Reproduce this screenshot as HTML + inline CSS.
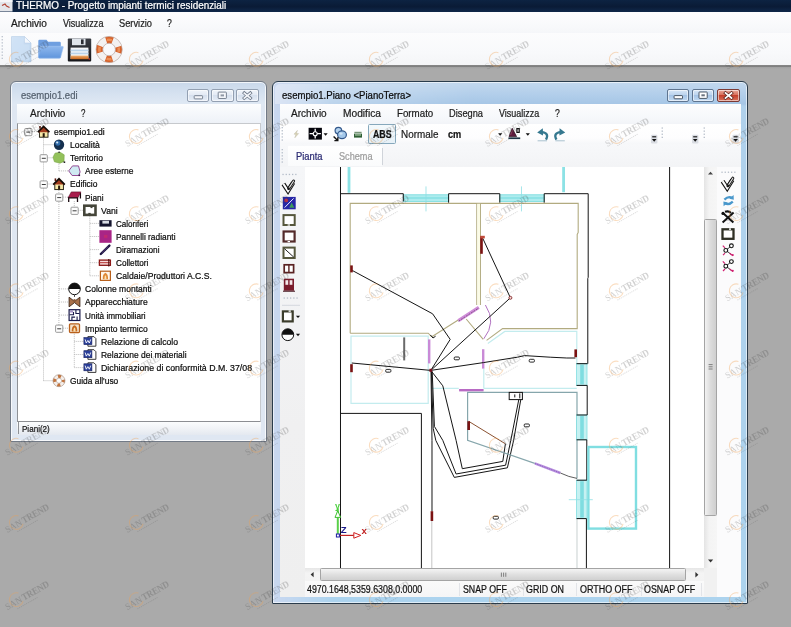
<!DOCTYPE html>
<html lang="it">
<head>
<meta charset="utf-8">
<title>THERMO - Progetto impianti termici residenziali</title>
<style>
*{box-sizing:border-box;margin:0;padding:0}
html,body{width:791px;height:627px;overflow:hidden;background:#aaaaaa}
body{position:relative;font-family:"Liberation Sans",sans-serif;}
.t{position:absolute;white-space:nowrap;line-height:1;transform-origin:0 50%;-webkit-text-stroke:0.22px currentColor;}
#root{position:absolute;left:0;top:0;width:791px;height:627px;overflow:hidden;will-change:transform;}
.a{position:absolute;overflow:visible}
</style>
</head>
<body>
<div id="root"><div style="position:absolute;left:0px;top:0px;width:791px;height:12.4px;background:linear-gradient(#0d2342,#0a1b36 55%,#10284a);"></div>
<svg class="a" style="left:0;top:0" width="13" height="12" viewBox="0 0 13 12"><rect x="0" y="0" width="12.5" height="11.5" fill="#e4e6ea"/><path d="M2 5.5 L5 4 L6.5 6 L9.5 7.5" stroke="#b04030" stroke-width="1.2" fill="none"/><rect x="0" y="0" width="12.5" height="2" fill="#f6f6f8"/></svg>
<span class="t" style="left:16.30px;top:0.65px;font-size:10.2px;color:#fff;transform:scaleX(0.9721);">THERMO - Progetto impianti termici residenziali</span>
<div style="position:absolute;left:0px;top:12.4px;width:791px;height:20.6px;background:linear-gradient(#fdfdfe,#f8f9fb 70%,#f5f6f9);"></div>
<span class="t" style="left:11.00px;top:18.60px;font-size:10.3px;color:#1c1c1c;transform:scaleX(0.9827);">Archivio</span>
<span class="t" style="left:62.60px;top:18.60px;font-size:10.3px;color:#1c1c1c;transform:scaleX(0.8747);">Visualizza</span>
<span class="t" style="left:118.70px;top:18.60px;font-size:10.3px;color:#1c1c1c;transform:scaleX(0.9008);">Servizio</span>
<span class="t" style="left:167.20px;top:18.60px;font-size:10.3px;color:#1c1c1c;transform:scaleX(0.8379);">?</span>
<div style="position:absolute;left:0px;top:33px;width:791px;height:32.6px;background:linear-gradient(#fcfcfd,#f8f9fb 60%,#f4f5f7);"></div>
<div style="position:absolute;left:0px;top:65.4px;width:791px;height:3.2px;background:linear-gradient(#8a8a8a,#7c7c7c 35%,#a2a2a2 60%,#aaaaaa);"></div>
<svg class="a" style="left:0;top:0" width="6" height="66" viewBox="0 0 6 66"><rect x="1.6" y="36.0" width="1.3" height="1.3" fill="#b9c0cc"/><rect x="1.6" y="39.1" width="1.3" height="1.3" fill="#b9c0cc"/><rect x="1.6" y="42.2" width="1.3" height="1.3" fill="#b9c0cc"/><rect x="1.6" y="45.3" width="1.3" height="1.3" fill="#b9c0cc"/><rect x="1.6" y="48.4" width="1.3" height="1.3" fill="#b9c0cc"/><rect x="1.6" y="51.5" width="1.3" height="1.3" fill="#b9c0cc"/><rect x="1.6" y="54.6" width="1.3" height="1.3" fill="#b9c0cc"/><rect x="1.6" y="57.7" width="1.3" height="1.3" fill="#b9c0cc"/></svg>
<svg class="a" style="left:8px;top:33.8px" width="120" height="32" viewBox="8 33 120 32">
<defs>
<linearGradient id="gdoc" x1="0" y1="0" x2="1" y2="1"><stop offset="0" stop-color="#d6e6f7"/><stop offset="1" stop-color="#b9d3ee"/></linearGradient>
<linearGradient id="gfol" x1="0" y1="0" x2="0" y2="1"><stop offset="0" stop-color="#8fb8ee"/><stop offset="1" stop-color="#5f95dc"/></linearGradient>
<linearGradient id="gfl" x1="0" y1="0" x2="0" y2="1"><stop offset="0" stop-color="#3a3d44"/><stop offset="1" stop-color="#17181c"/></linearGradient>
<linearGradient id="gor" x1="0" y1="0" x2="0" y2="1"><stop offset="0" stop-color="#f0b070"/><stop offset="1" stop-color="#c8661c"/></linearGradient>
<radialGradient id="gbu" cx="0.5" cy="0.4" r="0.6"><stop offset="0" stop-color="#f08a4a"/><stop offset="1" stop-color="#c4501a"/></radialGradient>
</defs>
<!-- new doc -->
<path d="M11.5 35.6 H24.5 L31 42 V60.8 H11.5 Z" fill="url(#gdoc)" stroke="#b4cbe4" stroke-width="0.6"/>
<path d="M24.5 35.6 V42 H31 Z" fill="#f4f8fd" stroke="#b4cbe4" stroke-width="0.5"/>
<path d="M13 37 H23.5 V43.5 H29.5 V59.5 H13 Z" fill="#cfe1f5" opacity="0.7"/>
<!-- folder -->
<path d="M38.3 40 q0 -1.2 1.2 -1.2 h7 l1.6 2 h11.5 q1.2 0 1.2 1.2 v14 q0 1.2 -1.2 1.2 h-20 q-1.3 0 -1.3 -1.2 z" fill="#6f9fe0"/>
<path d="M40.3 45.3 h22 q1.3 0 1 1.2 l-2.6 9.7 q-0.3 1 -1.5 1 h-19.6 q-1.3 0 -1.3 -1.2 z" fill="url(#gfol)" stroke="#a8c8f2" stroke-width="0.5"/>
<!-- floppy -->
<path d="M67.8 38.6 q0 -1 1 -1 h21.4 q1 0 1 1 v20.8 q0 1 -1 1 h-21.4 q-1 0 -1 -1 z" fill="url(#gfl)"/>
<rect x="72" y="37.6" width="13.5" height="6.6" fill="#dfe4ea"/>
<rect x="81" y="38.4" width="2.6" height="4.8" fill="#2a2c32"/>
<rect x="70.6" y="46.6" width="17.8" height="11.4" fill="#f4f6f8"/>
<rect x="70.6" y="48.6" width="17.8" height="1.7" fill="#b9d3ea"/>
<rect x="70.6" y="51.6" width="17.8" height="1.7" fill="#b9d3ea"/>
<rect x="70.6" y="54.6" width="17.8" height="3.6" fill="url(#gor)"/>
<rect x="88.6" y="57.2" width="1.3" height="1.6" fill="#b03020"/>
<!-- lifebuoy -->
<circle cx="109.1" cy="48.5" r="9.7" fill="none" stroke="#f3f1f0" stroke-width="6.8"/>
<circle cx="109.1" cy="48.5" r="9.7" fill="none" stroke="#d8622a" stroke-width="6.8" stroke-dasharray="6.6 8.64" stroke-dashoffset="3.3"/>
<circle cx="109.1" cy="48.5" r="9.7" fill="none" stroke="#f09a60" stroke-width="2.6" stroke-dasharray="5 10.24" stroke-dashoffset="2.5" opacity="0.8"/>
<circle cx="109.1" cy="48.5" r="13.1" fill="none" stroke="#b9a8a0" stroke-width="0.7"/>
<circle cx="109.1" cy="48.5" r="6.3" fill="none" stroke="#b9a8a0" stroke-width="0.7"/>
</svg>
<div style="position:absolute;left:9.9px;top:80.6px;width:257.6px;height:361.20000000000005px;border:1px solid #727a86;border-radius:6px 6px 1px 1px;background:linear-gradient(#c9d8ea,#d6e2f0 12px,#e0e9f4 23px,#dfe7f2 24px,#dfe7f2);box-shadow:inset 0 0 0 1px rgba(255,255,255,.75)"></div>
<span class="t" style="left:20.90px;top:90.55px;font-size:10.4px;color:#54606e;transform:scaleX(0.9149);">esempio1.edi</span>
<div style="position:absolute;left:186.8px;top:89px;width:22.4px;height:13px;border:1px solid #93a0b2;border-radius:2px;background:linear-gradient(#f0f4fa,#e3eaf4 45%,#d6e0ee 50%,#e6edf6);box-shadow:inset 0 0 0 1px rgba(255,255,255,.55)"></div><svg class="a" style="left:186.8px;top:89px" width="22.4" height="13" viewBox="186.8 89 22.4 13"><rect x="194.0" y="95.7" width="8.4" height="3.2" rx="0.6" fill="#f4f6fa" stroke="#6d7888" stroke-width="0.9"/></svg>
<div style="position:absolute;left:211.3px;top:89px;width:22.4px;height:13px;border:1px solid #93a0b2;border-radius:2px;background:linear-gradient(#f0f4fa,#e3eaf4 45%,#d6e0ee 50%,#e6edf6);box-shadow:inset 0 0 0 1px rgba(255,255,255,.55)"></div><svg class="a" style="left:211.3px;top:89px" width="22.4" height="13" viewBox="211.3 89 22.4 13"><rect x="218.5" y="92.1" width="8.2" height="6.4" rx="0.6" fill="#f4f6fa" stroke="#6d7888" stroke-width="0.9"/><rect x="220.9" y="94.4" width="3.4" height="2" fill="#6d7888" opacity="0.75"/></svg>
<div style="position:absolute;left:236px;top:89px;width:22.6px;height:13px;border:1px solid #93a0b2;border-radius:2px;background:linear-gradient(#f0f4fa,#e3eaf4 45%,#d6e0ee 50%,#e6edf6);box-shadow:inset 0 0 0 1px rgba(255,255,255,.55)"></div><svg class="a" style="left:236px;top:89px" width="22.6" height="13" viewBox="236 89 22.6 13"><path d="M244.3 93.1 L250.3 98.1 M250.3 93.1 L244.3 98.1" stroke="#6d7888" stroke-width="3.2" stroke-linecap="square"/><path d="M244.3 93.1 L250.3 98.1 M250.3 93.1 L244.3 98.1" stroke="#f4f6fa" stroke-width="1.7" stroke-linecap="square"/></svg>
<div style="position:absolute;left:16.6px;top:104px;width:244.4px;height:19.5px;background:linear-gradient(#fcfdfe,#f3f6fa 60%,#edf1f7);"></div>
<span class="t" style="left:29.70px;top:108.60px;font-size:10.3px;color:#1c1c1c;transform:scaleX(0.9663);">Archivio</span>
<span class="t" style="left:81.40px;top:108.60px;font-size:10.3px;color:#1c1c1c;transform:scaleX(0.7681);">?</span>
<div style="position:absolute;left:17.2px;top:123.4px;width:243.8px;height:299.2px;background:#fff;border:1px solid #c6c9cd;border-left:1.5px solid #8e9196;border-bottom:2.2px solid #8c8e92;"></div>
<div style="position:absolute;left:16.6px;top:422px;width:244.4px;height:13px;background:linear-gradient(#fbfcfd,#eef1f5 60%,#e4e9f0);"></div>
<div style="position:absolute;left:17.6px;top:422.4px;width:1.2px;height:11.6px;background:#8e9196;"></div>
<span class="t" style="left:21.60px;top:423.90px;font-size:9.7px;color:#111;transform:scaleX(0.8317);">Piani(2)</span>
<svg class="a" style="left:18px;top:124px" width="242" height="297" viewBox="18 124 242 297"><path d="M43.5 135.6 V380.7" stroke="#b4b4b4" stroke-width="0.9" stroke-dasharray="1 1"/><path d="M58.9 188.0 V328.2" stroke="#b4b4b4" stroke-width="0.9" stroke-dasharray="1 1"/><path d="M58.9 161.8 V170.9" stroke="#b4b4b4" stroke-width="0.9" stroke-dasharray="1 1"/><path d="M74.3 201.1 V210.3" stroke="#b4b4b4" stroke-width="0.9" stroke-dasharray="1 1"/><path d="M89.8 214.3 V275.8" stroke="#b4b4b4" stroke-width="0.9" stroke-dasharray="1 1"/><path d="M74.3 332.2 V367.6" stroke="#b4b4b4" stroke-width="0.9" stroke-dasharray="1 1"/><path d="M28.0 131.6 H37.6" stroke="#b4b4b4" stroke-width="0.9" stroke-dasharray="1 1"/><path d="M43.5 144.7 H53.0" stroke="#b4b4b4" stroke-width="0.9" stroke-dasharray="1 1"/><path d="M43.5 157.8 H53.0" stroke="#b4b4b4" stroke-width="0.9" stroke-dasharray="1 1"/><path d="M58.9 170.9 H68.5" stroke="#b4b4b4" stroke-width="0.9" stroke-dasharray="1 1"/><path d="M43.5 184.0 H53.0" stroke="#b4b4b4" stroke-width="0.9" stroke-dasharray="1 1"/><path d="M58.9 197.1 H68.5" stroke="#b4b4b4" stroke-width="0.9" stroke-dasharray="1 1"/><path d="M74.3 210.3 H83.9" stroke="#b4b4b4" stroke-width="0.9" stroke-dasharray="1 1"/><path d="M89.8 223.4 H99.4" stroke="#b4b4b4" stroke-width="0.9" stroke-dasharray="1 1"/><path d="M89.8 236.5 H99.4" stroke="#b4b4b4" stroke-width="0.9" stroke-dasharray="1 1"/><path d="M89.8 249.6 H99.4" stroke="#b4b4b4" stroke-width="0.9" stroke-dasharray="1 1"/><path d="M89.8 262.7 H99.4" stroke="#b4b4b4" stroke-width="0.9" stroke-dasharray="1 1"/><path d="M89.8 275.8 H99.4" stroke="#b4b4b4" stroke-width="0.9" stroke-dasharray="1 1"/><path d="M58.9 288.9 H68.5" stroke="#b4b4b4" stroke-width="0.9" stroke-dasharray="1 1"/><path d="M58.9 302.0 H68.5" stroke="#b4b4b4" stroke-width="0.9" stroke-dasharray="1 1"/><path d="M58.9 315.1 H68.5" stroke="#b4b4b4" stroke-width="0.9" stroke-dasharray="1 1"/><path d="M58.9 328.2 H68.5" stroke="#b4b4b4" stroke-width="0.9" stroke-dasharray="1 1"/><path d="M74.3 341.4 H83.9" stroke="#b4b4b4" stroke-width="0.9" stroke-dasharray="1 1"/><path d="M74.3 354.5 H83.9" stroke="#b4b4b4" stroke-width="0.9" stroke-dasharray="1 1"/><path d="M74.3 367.6 H83.9" stroke="#b4b4b4" stroke-width="0.9" stroke-dasharray="1 1"/><path d="M43.5 380.7 H53.0" stroke="#b4b4b4" stroke-width="0.9" stroke-dasharray="1 1"/><rect x="24.7" y="128.5" width="7.2" height="7.2" rx="0.8" fill="#fdfdfd" stroke="#8e8e8e" stroke-width="0.9"/><path d="M26.3 132.1 H30.3" stroke="#3a3a3a" stroke-width="1"/><rect x="39.4" y="131.0" width="8.6" height="6.2" fill="#f6e9a8" stroke="#1a1408" stroke-width="0.9"/><path d="M37.800000000000004 132.2 L43.6 126.39999999999999 L49.4 132.2" fill="#a03a1c" stroke="#140c06" stroke-width="1.7" stroke-linejoin="miter"/><rect x="42.7" y="133.2" width="2" height="3.8" fill="#2a1a0a"/><rect x="39.2" y="126.0" width="1.6" height="2.6" fill="#5a1a10"/><circle cx="59.0" cy="144.7" r="5.2" fill="#15304f"/><circle cx="57.8" cy="143.1" r="2.6" fill="#2f6aa8"/><circle cx="57.2" cy="142.5" r="1.1" fill="#cfe2f4"/><rect x="40.1" y="154.7" width="7.2" height="7.2" rx="0.8" fill="#fdfdfd" stroke="#8e8e8e" stroke-width="0.9"/><path d="M41.8 158.3 H45.8" stroke="#3a3a3a" stroke-width="1"/><path d="M55.0 153.20000000000002 L60.0 152.20000000000002 L64.2 154.8 L64.0 161.4 L60.0 163.20000000000002 L54.4 161.8 L53.0 157.20000000000002 Z" fill="#93c15a" stroke="#7aa548" stroke-width="0.6"/><rect x="63.6" y="161.4" width="1.6" height="1.6" fill="#222"/><rect x="58.4" y="151.60000000000002" width="1.4" height="1.4" fill="#333"/><path d="M72.5 165.9 L78.5 165.9 L80.1 171.9 L78.9 175.5 L72.1 175.5 L68.7 170.9 Z" fill="#cfeaf2" stroke="#8a3a8a" stroke-width="0.9"/><rect x="78.5" y="174.5" width="1.6" height="1.6" fill="#3a1a4a"/><rect x="40.1" y="180.9" width="7.2" height="7.2" rx="0.8" fill="#fdfdfd" stroke="#8e8e8e" stroke-width="0.9"/><path d="M41.8 184.5 H45.8" stroke="#3a3a3a" stroke-width="1"/><rect x="54.8" y="183.4" width="8.6" height="6.2" fill="#f6e9a8" stroke="#1a1408" stroke-width="0.9"/><path d="M53.2 184.6 L59.0 178.8 L64.8 184.6" fill="#a03a1c" stroke="#140c06" stroke-width="1.7" stroke-linejoin="miter"/><rect x="58.1" y="185.6" width="2" height="3.8" fill="#2a1a0a"/><rect x="54.6" y="178.4" width="1.6" height="2.6" fill="#5a1a10"/><rect x="55.6" y="194.0" width="7.2" height="7.2" rx="0.8" fill="#fdfdfd" stroke="#8e8e8e" stroke-width="0.9"/><path d="M57.2 197.6 H61.2" stroke="#3a3a3a" stroke-width="1"/><path d="M68.7 201.9 V197.29999999999998 M77.5 201.9 V197.29999999999998 M80.4 198.5 V192.7" stroke="#1a0a10" stroke-width="1.3" fill="none"/><path d="M71.3 191.9 H80.9 L77.9 197.7 H68.1 Z" fill="#a81c4c" stroke="#5a0a24" stroke-width="0.6"/><path d="M68.1 197.9 H77.9" stroke="#1a0a10" stroke-width="1.1"/><rect x="71.0" y="207.2" width="7.2" height="7.2" rx="0.8" fill="#fdfdfd" stroke="#8e8e8e" stroke-width="0.9"/><path d="M72.6 210.8 H76.6" stroke="#3a3a3a" stroke-width="1"/><rect x="84.30000000000001" y="205.70000000000002" width="11.2" height="9.2" fill="#fff" stroke="#45463a" stroke-width="2.6"/><rect x="90.5" y="206.9" width="2" height="1.2" fill="#45463a"/><rect x="88.30000000000001" y="212.9" width="2.4" height="1.2" fill="#45463a"/><rect x="99.4" y="220.20000000000002" width="12.2" height="6.4" fill="#15152e"/><rect x="102.4" y="220.8" width="6.6" height="2.8" fill="#d8dce4"/><rect x="99.4" y="230.2" width="12.2" height="12.6" fill="#a92586"/><rect x="104.0" y="234.9" width="3.4" height="3" fill="#c02a70"/><path d="M100.80000000000001 254.0 L109.4 245.6" stroke="#1c1440" stroke-width="2.4" stroke-linecap="round"/><path d="M101.80000000000001 252.79999999999998 L108.4 246.4" stroke="#6a4a90" stroke-width="0.7"/><rect x="99.4" y="260.09999999999997" width="11" height="5.2" fill="#f6dada" stroke="#8a1616" stroke-width="1.3"/><path d="M99.4 262.7 H110.4" stroke="#b43030" stroke-width="1"/><path d="M108.80000000000001 258.9 V266.5" stroke="#4a0a0a" stroke-width="1.1"/><rect x="100.4" y="271.2" width="10" height="9.2" fill="#fff6ea" stroke="#b8601c" stroke-width="1.2"/><path d="M102.80000000000001 279.2 Q102.4 274.2 105.4 272.8 Q108.4 274.2 108.0 279.2 Z" fill="#e08a38"/><path d="M104.4 279.2 Q104.4 275.8 105.4 275.2 Q106.4 275.8 106.4 279.2 Z" fill="#fbe2b0"/><circle cx="74.5" cy="288.9" r="5.8" fill="#fff" stroke="#111" stroke-width="1"/><path d="M68.7 288.9 A5.8 5.8 0 0 1 80.3 288.9 Z" fill="#111"/><path d="M74.5 294.7 V296.9" stroke="#444" stroke-width="1"/><path d="M69.1 297.2 L74.5 301.4 L79.9 297.2 V306.8 L74.5 302.6 L69.1 306.8 Z" fill="#a8704a" stroke="#3a2416" stroke-width="0.9"/><circle cx="74.5" cy="300.6" r="1.5" fill="#8a5a3a"/><rect x="69.1" y="309.70000000000005" width="10.8" height="10.8" fill="#fff" stroke="#1a1a4a" stroke-width="1.2"/><path d="M69.5 314.70000000000005 H73.5 V312.1 M75.9 310.1 V313.5 H79.5 M71.9 320.1 V317.1 H75.1 M77.1 320.1 V316.5" stroke="#1a1a4a" stroke-width="1.1" fill="none"/><rect x="70.1" y="310.5" width="3" height="2" fill="#6a4aa0" opacity="0.6"/><rect x="55.6" y="325.1" width="7.2" height="7.2" rx="0.8" fill="#fdfdfd" stroke="#8e8e8e" stroke-width="0.9"/><path d="M57.2 328.8 H61.2" stroke="#3a3a3a" stroke-width="1"/><rect x="69.5" y="323.8" width="10" height="8.8" rx="1" fill="#f3e2cc" stroke="#b8601c" stroke-width="1.3"/><path d="M71.7 331.59999999999997 Q71.5 326.2 74.5 325.2 Q77.5 326.2 77.3 331.59999999999997 Z" fill="#c66a20"/><path d="M73.4 331.59999999999997 Q73.4 327.8 74.5 327.4 Q75.6 327.8 75.6 331.59999999999997 Z" fill="#fbe2b0"/><path d="M87.9 336.59999999999997 H93.9 L95.9 338.59999999999997 V346.2 H87.9 Z" fill="#fff" stroke="#222" stroke-width="0.9"/><rect x="83.9" y="337.59999999999997" width="8" height="7" fill="#2a3f9a" stroke="#151f5a" stroke-width="0.6"/><path d="M85.10000000000001 339.4 L86.30000000000001 343.0 L87.9 340.4 L89.30000000000001 343.0 L90.7 339.4" stroke="#fff" stroke-width="0.9" fill="none"/><path d="M87.9 349.7 H93.9 L95.9 351.7 V359.3 H87.9 Z" fill="#fff" stroke="#222" stroke-width="0.9"/><rect x="83.9" y="350.7" width="8" height="7" fill="#2a3f9a" stroke="#151f5a" stroke-width="0.6"/><path d="M85.10000000000001 352.5 L86.30000000000001 356.1 L87.9 353.5 L89.30000000000001 356.1 L90.7 352.5" stroke="#fff" stroke-width="0.9" fill="none"/><path d="M87.9 362.8 H93.9 L95.9 364.8 V372.40000000000003 H87.9 Z" fill="#fff" stroke="#222" stroke-width="0.9"/><rect x="83.9" y="363.8" width="8" height="7" fill="#2a3f9a" stroke="#151f5a" stroke-width="0.6"/><path d="M85.10000000000001 365.6 L86.30000000000001 369.20000000000005 L87.9 366.6 L89.30000000000001 369.20000000000005 L90.7 365.6" stroke="#fff" stroke-width="0.9" fill="none"/><circle cx="59.0" cy="380.7" r="4.3" fill="none" stroke="#f4eeea" stroke-width="3.2"/><circle cx="59.0" cy="380.7" r="4.3" fill="none" stroke="#c4743c" stroke-width="3.2" stroke-dasharray="3 3.75" stroke-dashoffset="1.5"/><circle cx="59.0" cy="380.7" r="6" fill="none" stroke="#a08878" stroke-width="0.6"/><circle cx="59.0" cy="380.7" r="2.6" fill="none" stroke="#a08878" stroke-width="0.5"/></svg>
<span class="t" style="left:54.00px;top:126.90px;font-size:9.7px;color:#0a0a0a;transform:scaleX(0.8804);">esempio1.edi</span>
<span class="t" style="left:69.60px;top:139.90px;font-size:9.7px;color:#0a0a0a;transform:scaleX(0.8943);">Località</span>
<span class="t" style="left:69.60px;top:152.90px;font-size:9.7px;color:#0a0a0a;transform:scaleX(0.8746);">Territorio</span>
<span class="t" style="left:85.20px;top:165.90px;font-size:9.7px;color:#0a0a0a;transform:scaleX(0.8750);">Aree esterne</span>
<span class="t" style="left:69.60px;top:178.90px;font-size:9.7px;color:#0a0a0a;transform:scaleX(0.8762);">Edificio</span>
<span class="t" style="left:85.20px;top:192.90px;font-size:9.7px;color:#0a0a0a;transform:scaleX(0.8577);">Piani</span>
<span class="t" style="left:100.80px;top:205.90px;font-size:9.7px;color:#0a0a0a;transform:scaleX(0.8933);">Vani</span>
<span class="t" style="left:116.40px;top:218.90px;font-size:9.7px;color:#0a0a0a;transform:scaleX(0.8322);">Caloriferi</span>
<span class="t" style="left:116.40px;top:231.90px;font-size:9.7px;color:#0a0a0a;transform:scaleX(0.8635);">Pannelli radianti</span>
<span class="t" style="left:116.40px;top:244.90px;font-size:9.7px;color:#0a0a0a;transform:scaleX(0.8514);">Diramazioni</span>
<span class="t" style="left:116.40px;top:257.90px;font-size:9.7px;color:#0a0a0a;transform:scaleX(0.8439);">Collettori</span>
<span class="t" style="left:116.40px;top:270.90px;font-size:9.7px;color:#0a0a0a;transform:scaleX(0.8902);">Caldaie/Produttori A.C.S.</span>
<span class="t" style="left:85.20px;top:283.90px;font-size:9.7px;color:#0a0a0a;transform:scaleX(0.8786);">Colonne montanti</span>
<span class="t" style="left:85.20px;top:296.90px;font-size:9.7px;color:#0a0a0a;transform:scaleX(0.8890);">Apparecchiature</span>
<span class="t" style="left:85.20px;top:310.90px;font-size:9.7px;color:#0a0a0a;transform:scaleX(0.8453);">Unità immobiliari</span>
<span class="t" style="left:85.20px;top:323.90px;font-size:9.7px;color:#0a0a0a;transform:scaleX(0.8759);">Impianto termico</span>
<span class="t" style="left:100.80px;top:336.90px;font-size:9.7px;color:#0a0a0a;transform:scaleX(0.8948);">Relazione di calcolo</span>
<span class="t" style="left:100.80px;top:349.90px;font-size:9.7px;color:#0a0a0a;transform:scaleX(0.8733);">Relazione dei materiali</span>
<span class="t" style="left:100.80px;top:362.90px;font-size:9.7px;color:#0a0a0a;transform:scaleX(0.9047);">Dichiarazione di conformità D.M. 37/08</span>
<span class="t" style="left:69.60px;top:375.90px;font-size:9.7px;color:#0a0a0a;transform:scaleX(0.8660);">Guida all'uso</span>
<div style="position:absolute;left:272.3px;top:80.5px;width:475.7px;height:523.3px;border:1px solid #2a3c4c;border-radius:6px 6px 1px 1px;background:linear-gradient(90deg,rgba(203,216,240,.95),rgba(203,216,240,0) 60px),linear-gradient(#c3d8ee,#b0cdea 14px,#a6c6e6 22px,#b0d1ec 24px,#acd3ee);box-shadow:inset 0 0 0 1px rgba(255,255,255,.6)"></div>
<div style="position:absolute;left:274.5px;top:83.5px;width:200px;height:20px;background:linear-gradient(90deg,rgba(255,255,255,.35),rgba(255,255,255,0));border-radius:5px 0 0 0;"></div>
<span class="t" style="left:282.00px;top:90.65px;font-size:10.2px;color:#0a0a0a;transform:scaleX(0.9415);">esempio1.Piano &lt;PianoTerra&gt;</span>
<div style="position:absolute;left:667.3px;top:89px;width:22.2px;height:12.8px;border:1px solid #5f7590;border-radius:2px;background:linear-gradient(#d7e6f6,#bcd4ee 45%,#a5c4e6 50%,#c2daf2);box-shadow:inset 0 0 0 1px rgba(255,255,255,.55)"></div><svg class="a" style="left:667.3px;top:89px" width="22.2" height="12.8" viewBox="667.3 89 22.2 12.8"><rect x="674.4" y="95.6" width="8.4" height="3.2" rx="0.6" fill="#fff" stroke="#3a4656" stroke-width="0.9"/></svg>
<div style="position:absolute;left:692.3px;top:89px;width:22px;height:12.8px;border:1px solid #5f7590;border-radius:2px;background:linear-gradient(#d7e6f6,#bcd4ee 45%,#a5c4e6 50%,#c2daf2);box-shadow:inset 0 0 0 1px rgba(255,255,255,.55)"></div><svg class="a" style="left:692.3px;top:89px" width="22" height="12.8" viewBox="692.3 89 22 12.8"><rect x="699.3" y="92.0" width="8.2" height="6.4" rx="0.6" fill="#fff" stroke="#3a4656" stroke-width="0.9"/><rect x="701.7" y="94.3" width="3.4" height="2" fill="#3a4656" opacity="0.75"/></svg>
<div style="position:absolute;left:716.6px;top:89px;width:23px;height:12.8px;border:1px solid #7c3a34;border-radius:2px;background:linear-gradient(#e9a99b,#d9705c 45%,#c4402c 50%,#d8705a);box-shadow:inset 0 0 0 1px rgba(255,255,255,.55)"></div><svg class="a" style="left:716.6px;top:89px" width="23" height="12.8" viewBox="716.6 89 23 12.8"><path d="M725.1 93.0 L731.1 98.0 M731.1 93.0 L725.1 98.0" stroke="#5a2620" stroke-width="3.2" stroke-linecap="square"/><path d="M725.1 93.0 L731.1 98.0 M731.1 93.0 L725.1 98.0" stroke="#fff" stroke-width="1.7" stroke-linecap="square"/></svg>
<div style="position:absolute;left:279.6px;top:104px;width:461.6px;height:492.79999999999995px;background:#f4f5f7;"></div>
<div style="position:absolute;left:279.6px;top:104px;width:461.6px;height:20px;background:linear-gradient(#fdfdfe,#f6f8fb 70%,#f2f4f8);"></div>
<span class="t" style="left:290.90px;top:108.60px;font-size:10.3px;color:#1c1c1c;transform:scaleX(0.9745);">Archivio</span>
<span class="t" style="left:342.60px;top:108.60px;font-size:10.3px;color:#1c1c1c;transform:scaleX(0.9908);">Modifica</span>
<span class="t" style="left:396.70px;top:108.60px;font-size:10.3px;color:#1c1c1c;transform:scaleX(0.9465);">Formato</span>
<span class="t" style="left:449.00px;top:108.60px;font-size:10.3px;color:#1c1c1c;transform:scaleX(0.8997);">Disegna</span>
<span class="t" style="left:498.90px;top:108.60px;font-size:10.3px;color:#1c1c1c;transform:scaleX(0.8704);">Visualizza</span>
<span class="t" style="left:555.00px;top:108.60px;font-size:10.3px;color:#1c1c1c;transform:scaleX(0.8379);">?</span>
<div style="position:absolute;left:279.6px;top:124px;width:461.6px;height:20.4px;background:linear-gradient(#ffffff,#fdfdfe 70%,#f6f7f9);"></div>
<div style="position:absolute;left:368.2px;top:124.2px;width:27.8px;height:19.5px;border:1px solid #86a8bc;background:linear-gradient(#f4f9fc,#e6f0f7);border-radius:1.5px;"></div>
<span class="t" style="left:373.20px;top:129.75px;font-size:10px;color:#111;font-weight:bold;transform:scaleX(0.8809);">ABS</span>
<span class="t" style="left:400.60px;top:129.60px;font-size:10.3px;color:#1c1c1c;transform:scaleX(0.9609);">Normale</span>
<span class="t" style="left:447.50px;top:129.60px;font-size:10.3px;color:#111;font-weight:bold;transform:scaleX(0.8934);">cm</span>
<svg class="a" style="left:279px;top:124px" width="462" height="21" viewBox="279 124 462 21"><rect x="281.6" y="127.0" width="1.3" height="1.3" fill="#b4bcc8"/><rect x="281.6" y="130.1" width="1.3" height="1.3" fill="#b4bcc8"/><rect x="281.6" y="133.2" width="1.3" height="1.3" fill="#b4bcc8"/><rect x="281.6" y="136.3" width="1.3" height="1.3" fill="#b4bcc8"/><rect x="281.6" y="139.4" width="1.3" height="1.3" fill="#b4bcc8"/><path d="M297.4 130.4 L294 134.2 H296 L294.8 137.8 L298.6 133.6 H296.4 Z" fill="#ddd6b4" stroke="#b4b0a0" stroke-width="0.4"/><rect x="308.6" y="127.8" width="13.3" height="11.8" fill="#05050c"/><path d="M309.6 133.7 H320.9 M315.2 128.8 V138.6" stroke="#fff" stroke-width="1.3"/><circle cx="315.2" cy="133.7" r="2" fill="#05050c" stroke="#fff" stroke-width="1.1"/><path d="M323.5 133.3 H327.7 L325.6 135.7 Z" fill="#111"/><circle cx="338.4" cy="130.6" r="3.3" fill="#b4d2ee" stroke="#34598c" stroke-width="1.2"/><ellipse cx="342" cy="134.8" rx="4.4" ry="3.9" fill="#a4c8ea" stroke="#34598c" stroke-width="1.2"/><ellipse cx="341" cy="133.6" rx="1.6" ry="1.2" fill="#d4e6f6"/><path d="M333.6 136.4 L337.4 140.2 M337.8 137.2 V140.6 H334.4" stroke="#111" stroke-width="1.4" fill="none"/><rect x="354" y="133.6" width="8" height="4" fill="#2f5f34"/><rect x="355" y="134.4" width="6" height="1.1" fill="#b8d4b4"/><rect x="354.4" y="131.8" width="7.2" height="1.1" fill="#6a8a6a"/><path d="M498.1 133.3 H502.3 L500.2 135.7 Z" fill="#111"/><path d="M509 136.6 L512.2 128.2 L516.6 136.6 Z" fill="#5c1a3c" stroke="#2a0a1c" stroke-width="0.7"/><path d="M510.6 135 L512.6 130.4" stroke="#a04a6a" stroke-width="0.7"/><rect x="508.4" y="137.4" width="11.8" height="1.7" fill="#1c3444"/><path d="M516.9 128.7 h2.3 v3.7 h-2.3 z" fill="none" stroke="#111" stroke-width="1.2"/><path d="M525.7 133.3 H529.9 L527.8 135.7 Z" fill="#111"/><path d="M546 139.6 q3.6 -6.6 -4.4 -7.4" fill="none" stroke="#35788f" stroke-width="2.3"/><path d="M537.2 132.4 l5.6 -4.2 l0.2 7.4 z" fill="#35788f"/><path d="M537.6 140.8 h9.4" stroke="#8ab" stroke-width="0.7"/><path d="M556.4 139.6 q-3.6 -6.6 4.4 -7.4" fill="none" stroke="#35788f" stroke-width="2.3"/><path d="M565.2 132.4 l-5.6 -4.2 l-0.2 7.4 z" fill="#35788f"/><path d="M555.4 140.8 h9.4" stroke="#8ab" stroke-width="0.7"/><rect x="651.0" y="134.8" width="6.4" height="8.6" rx="1.2" fill="#d9dce2"/><path d="M652.2 136.8 H656.2" stroke="#111" stroke-width="1.1"/><path d="M651.9 139.0 H656.5 L654.2 141.8 Z" fill="#111"/><rect x="692.0" y="134.8" width="6.4" height="8.6" rx="1.2" fill="#d9dce2"/><path d="M693.2 136.8 H697.2" stroke="#111" stroke-width="1.1"/><path d="M692.9 139.0 H697.5 L695.2 141.8 Z" fill="#111"/><rect x="732.4" y="134.8" width="6.4" height="8.6" rx="1.2" fill="#d9dce2"/><path d="M733.6 136.8 H737.6" stroke="#111" stroke-width="1.1"/><path d="M733.3 139.0 H737.9 L735.6 141.8 Z" fill="#111"/><rect x="661.6" y="127.4" width="1.3" height="1.3" fill="#b4bcc8"/><rect x="661.6" y="130.5" width="1.3" height="1.3" fill="#b4bcc8"/><rect x="661.6" y="133.6" width="1.3" height="1.3" fill="#b4bcc8"/><rect x="661.6" y="136.7" width="1.3" height="1.3" fill="#b4bcc8"/><rect x="703.6" y="127.4" width="1.3" height="1.3" fill="#b4bcc8"/><rect x="703.6" y="130.5" width="1.3" height="1.3" fill="#b4bcc8"/><rect x="703.6" y="133.6" width="1.3" height="1.3" fill="#b4bcc8"/><rect x="703.6" y="136.7" width="1.3" height="1.3" fill="#b4bcc8"/></svg>
<div style="position:absolute;left:279.6px;top:144.4px;width:461.6px;height:22.2px;background:linear-gradient(#f7f8fa,#f3f4f6);"></div>
<div style="position:absolute;left:288px;top:146.4px;width:94px;height:20px;background:linear-gradient(#ffffff,#fafbfc);"></div>
<div style="position:absolute;left:382px;top:147.5px;width:1px;height:17px;background:#d0d4da;"></div>
<svg class="a" style="left:279px;top:145px" width="10" height="22" viewBox="279 145 10 22"><rect x="281.6" y="149.0" width="1.3" height="1.3" fill="#b4bcc8"/><rect x="281.6" y="152.1" width="1.3" height="1.3" fill="#b4bcc8"/><rect x="281.6" y="155.2" width="1.3" height="1.3" fill="#b4bcc8"/><rect x="281.6" y="158.3" width="1.3" height="1.3" fill="#b4bcc8"/><rect x="281.6" y="161.4" width="1.3" height="1.3" fill="#b4bcc8"/></svg>
<span class="t" style="left:296.00px;top:151.70px;font-size:10.1px;color:#2a2a72;transform:scaleX(0.9288);">Pianta</span>
<span class="t" style="left:338.70px;top:151.70px;font-size:10.1px;color:#9c9c9c;transform:scaleX(0.9068);">Schema</span>
<div style="position:absolute;left:279.6px;top:166.6px;width:25.599999999999966px;height:430px;background:linear-gradient(#f5f6f8,#f0f0f1 60%,#efefef);"></div>
<svg class="a" style="left:279px;top:167px" width="26" height="180" viewBox="279 167 26 180"><rect x="282.4" y="173.8" width="1.3" height="1.3" fill="#b4bcc8"/><rect x="285.6" y="173.8" width="1.3" height="1.3" fill="#b4bcc8"/><rect x="288.8" y="173.8" width="1.3" height="1.3" fill="#b4bcc8"/><rect x="292.0" y="173.8" width="1.3" height="1.3" fill="#b4bcc8"/><rect x="295.2" y="173.8" width="1.3" height="1.3" fill="#b4bcc8"/><path d="M283.4 184.0 L288.0 191.0 L293.2 182.6" stroke="#151515" stroke-width="4.4" fill="none" stroke-linejoin="miter" stroke-linecap="butt"/><path d="M283.4 184.0 L288.0 191.0 L293.2 182.6" stroke="#fff" stroke-width="2.2" fill="none" stroke-linejoin="miter" stroke-linecap="butt"/><path d="M288.8 188.4 L293.6 181.0" stroke="#151515" stroke-width="3" stroke-linecap="round"/><path d="M288.8 188.4 L293.6 181.0" stroke="#e8e8e8" stroke-width="1.1" stroke-linecap="round"/><path d="M288.0 189.8 l1.4 -2.2" stroke="#151515" stroke-width="1.6"/><rect x="282.8" y="196.9" width="12.9" height="12.4" fill="#2626a6"/><circle cx="286.2" cy="200.4" r="1.9" fill="#c03048"/><path d="M289.2 207.8 L291.6 202.6 L294.4 207.8 Z" fill="#3c9a5a"/><path d="M284.6 207.6 L293.6 198.4" stroke="#e8e8ff" stroke-width="1"/><rect x="283.5" y="215.1" width="11.2" height="9.9" fill="#fff" stroke="#56573c" stroke-width="2"/><rect x="287.6" y="224.4" width="2.4" height="1.2" fill="#fff"/><rect x="283.6" y="231.5" width="11.0" height="10.0" fill="#fff" stroke="#532a2a" stroke-width="2.2"/><rect x="287.6" y="241" width="2.4" height="1.2" fill="#fff"/><rect x="283.5" y="247.6" width="11.2" height="10.4" fill="#fff" stroke="#56573c" stroke-width="2"/><path d="M284.4 248.6 L293.8 257.2" stroke="#222" stroke-width="1"/><rect x="284.2" y="264.8" width="9.4" height="7.8" fill="#fff" stroke="#5a2222" stroke-width="1.7"/><path d="M288.9 264.8 V272.6" stroke="#5a2222" stroke-width="1.4"/><rect x="283.8" y="278.7" width="10.2" height="12" fill="#7a1c2c"/><rect x="285.4" y="280.2" width="2.8" height="4.6" fill="#f4e8ea"/><rect x="289.6" y="280.2" width="2.8" height="4.6" fill="#f4e8ea"/><path d="M283 291.2 H295" stroke="#3a0a12" stroke-width="1"/><rect x="283.6" y="297.4" width="1.3" height="1.3" fill="#b4bcc8"/><rect x="286.8" y="297.4" width="1.3" height="1.3" fill="#b4bcc8"/><rect x="290.0" y="297.4" width="1.3" height="1.3" fill="#b4bcc8"/><rect x="293.2" y="297.4" width="1.3" height="1.3" fill="#b4bcc8"/><rect x="296.4" y="297.4" width="1.3" height="1.3" fill="#b4bcc8"/><path d="M282 305.3 H300" stroke="#d4d8de" stroke-width="1"/><rect x="282.9" y="311.4" width="9.8" height="10.0" fill="#fff" stroke="#3c3d2c" stroke-width="2.2"/><rect x="288.6" y="310.4" width="2.2" height="1.4" fill="#fff"/><path d="M295.9 315.7 H300.1 L298.0 318.1 Z" fill="#111"/><circle cx="287.8" cy="334.7" r="5.9" fill="#fff" stroke="#111" stroke-width="1"/><path d="M281.9 334.7 A5.9 5.9 0 0 1 293.7 334.7 Z" fill="#111"/><path d="M295.9 333.8 H300.1 L298.0 336.2 Z" fill="#111"/></svg>
<div style="position:absolute;left:717px;top:166.6px;width:24.200000000000045px;height:430px;background:#fbfbfc;"></div>
<svg class="a" style="left:717px;top:167px" width="24" height="110" viewBox="717 167 24 110"><rect x="721.4" y="171.6" width="1.3" height="1.3" fill="#b4bcc8"/><rect x="724.6" y="171.6" width="1.3" height="1.3" fill="#b4bcc8"/><rect x="727.8" y="171.6" width="1.3" height="1.3" fill="#b4bcc8"/><rect x="731.0" y="171.6" width="1.3" height="1.3" fill="#b4bcc8"/><rect x="734.2" y="171.6" width="1.3" height="1.3" fill="#b4bcc8"/><path d="M722.6 181.2 L727.2 188.2 L732.4 179.8" stroke="#151515" stroke-width="4.4" fill="none" stroke-linejoin="miter" stroke-linecap="butt"/><path d="M722.6 181.2 L727.2 188.2 L732.4 179.8" stroke="#fff" stroke-width="2.2" fill="none" stroke-linejoin="miter" stroke-linecap="butt"/><path d="M728.0 185.6 L732.8 178.2" stroke="#151515" stroke-width="3" stroke-linecap="round"/><path d="M728.0 185.6 L732.8 178.2" stroke="#e8e8e8" stroke-width="1.1" stroke-linecap="round"/><path d="M727.2 187.0 l1.4 -2.2" stroke="#151515" stroke-width="1.6"/><path d="M724.4 199.6 q4 -4 8 -1.6" fill="none" stroke="#4a98cc" stroke-width="2.2"/><path d="M733.6 195 l0.2 4.8 l-4.6 -1 z" fill="#4a98cc"/><path d="M732.8 201.6 q-4 4 -8 1.6" fill="none" stroke="#4a98cc" stroke-width="2.2"/><path d="M723.6 206.2 l-0.2 -4.8 l4.6 1 z" fill="#4a98cc"/><path d="M722.4 212.6 L733.4 222.4 M733.6 212.6 L722.6 222.4" stroke="#111" stroke-width="2"/><path d="M725 211.8 q3.6 -1.4 6 1.2" stroke="#111" stroke-width="2.2" fill="none"/><circle cx="723" cy="213.4" r="1.6" fill="#111"/><rect x="722.5" y="229.3" width="11.0" height="9.5" fill="#fff" stroke="#2e2f24" stroke-width="2.3"/><rect x="729" y="228.4" width="2" height="1.4" fill="#fff"/><path d="M731.0 246 L726.0 250.4 L731.4 254.6" stroke="#222" stroke-width="0.9" fill="none"/><circle cx="731.4" cy="245.8" r="1.9" fill="#fff" stroke="#111" stroke-width="1.1"/><circle cx="725.8" cy="250.4" r="1.9" fill="#fff" stroke="#111" stroke-width="1.1"/><path d="M722.8 245.6 l2.2 2.2 M729.6 253.2 l3.4 2.6 M723.0 255.2 l2-2" stroke="#d02070" stroke-width="1.2"/><circle cx="732.8" cy="255" r="1" fill="#d02070"/><path d="M731.0 261.8 L726.0 266.2 L731.4 270.40000000000003" stroke="#222" stroke-width="0.9" fill="none"/><circle cx="731.4" cy="261.6" r="1.9" fill="#fff" stroke="#111" stroke-width="1.1"/><circle cx="725.8" cy="266.2" r="1.9" fill="#fff" stroke="#111" stroke-width="1.1"/><path d="M722.8 261.40000000000003 l2.2 2.2 M729.6 269.0 l3.4 2.6 M723.0 271.0 l2-2" stroke="#d02070" stroke-width="1.2"/><circle cx="732.8" cy="270.8" r="1" fill="#d02070"/></svg>
<div style="position:absolute;left:305.2px;top:166.6px;width:398.6px;height:401px;background:#fff;overflow:hidden;"><svg style="position:absolute;left:0;top:0" width="398.6" height="401" viewBox="305.2 166.6 398.6 401"><path d="M340.7 166 V568 M669.8 166 V568" stroke="#141414" stroke-width="1" fill="none"/><path d="M349.2 166 V192.4" stroke="#8ce2e5" stroke-width="2.8"/><path d="M563.8 166 V191.8" stroke="#8ce2e5" stroke-width="2.8"/><rect x="403.5" y="194.4" width="45.30000000000001" height="6.6" fill="#b4eef0" stroke="#80dee1" stroke-width="1"/><rect x="403.5" y="196.4" width="45.30000000000001" height="2.4" fill="#8fe3e6"/><path d="M426.2 186 V211" stroke="#8fe0e4" stroke-width="0.8"/><rect x="500" y="194.4" width="44.39999999999998" height="6.6" fill="#b4eef0" stroke="#80dee1" stroke-width="1"/><rect x="500" y="196.4" width="44.39999999999998" height="2.4" fill="#8fe3e6"/><path d="M521.7 186 V211" stroke="#8fe0e4" stroke-width="0.8"/><path d="M340.7 193.3 H403.5 V201 M448.8 202.4 V193.3 H500 V202.4 M544.4 202.4 V193.3 H588.4 V277 L588 278 V363.3 H576.8" stroke="#141414" stroke-width="1" fill="none"/><path d="M350.4 332.8 V203 H578.4 V232 L577.4 234 V328.2 H502.8 L486.8 340" stroke="#b2ab80" stroke-width="1.1" fill="none"/><path d="M350.4 332.8 H428.4 L432 336.4" stroke="#b2ab80" stroke-width="1.1" fill="none"/><path d="M477 203 V304.6 M480.6 203 V304.6" stroke="#b2ab80" stroke-width="1.1" fill="none"/><rect x="477.4" y="203.4" width="2.8" height="101" fill="#fbfbe6"/><path d="M432 336.4 L458.4 319.6 M466.4 318.6 L483.4 339" stroke="#b2ab80" stroke-width="1.1" fill="none" stroke-width="0.8"/><path d="M430.6 334.6 l2.6 3 l2.6 -1.8" stroke="#141414" stroke-width="1" fill="none" stroke-width="0.7"/><path d="M351.2 335.8 H428.4 V403 H351.2 Z" stroke="#c3ecee" stroke-width="1.2" fill="none"/><path d="M577 363 V331 H505 L488 343 M484 388 H577" stroke="#c3ecee" stroke-width="1.2" fill="none"/><path d="M432 388 H459 M484 368 V388" stroke="#c3ecee" stroke-width="1.2" fill="none"/><path d="M577.2 518 V568" stroke="#c8d0d0" stroke-width="1" fill="none"/><path d="M404.4 337 V360" stroke="#6a6a6a" stroke-width="2"/><path d="M429.4 339 V363" stroke="#c98ad6" stroke-width="2.4"/><path d="M483.4 348.8 V368.2" stroke="#c98ad6" stroke-width="2.4"/><path d="M459.3 389.8 H483.8" stroke="#b86ac4" stroke-width="2.4"/><path d="M458.6 320.2 L479 307" stroke="#cf8cd8" stroke-width="3.2"/><path d="M458.6 320.8 L479 307.6" stroke="#6a3a70" stroke-width="0.7" stroke-dasharray="2 1"/><path d="M485.6 304.6 Q497 322 484 338.4" stroke="#b070c0" stroke-width="1" fill="none"/><path d="M535 463 L560.6 472.6" stroke="#b890e0" stroke-width="2.6"/><path d="M535 463 L560.6 472.6" stroke="#7a4aa8" stroke-width="0.6" stroke-dasharray="1.5 1"/><path d="M352.4 270 L432.8 313.4 L450.4 339 L431 370" stroke="#141414" stroke-width="1" fill="none"/><path d="M483 238 L510.6 297.4 L431 370" stroke="#141414" stroke-width="1" fill="none"/><path d="M352 362.6 L431 370 L483.6 362.2 L517.6 356.8 L524.8 355.2 L550.4 356.8 L567 357.6 H575.6" stroke="#141414" stroke-width="1" fill="none"/><path d="M431 370 L443 385.4 L456.3 440 L462.5 468.3 L503 461 L505.6 443.4" stroke="#141414" stroke-width="1" fill="none"/><path d="M431.6 370 L433.4 428 L436 440 L454.5 477 L507.6 467.4 L513.8 440 L521 399.2" stroke="#141414" stroke-width="1" fill="none"/><path d="M432.4 371 L434.6 426 L443 440 L456.3 473.6 L505.8 464.8 L511 440 L519 399.2" stroke="#141414" stroke-width="1" fill="none"/><path d="M431.2 370 L432.2 440 V510.8" stroke="#141414" stroke-width="1" fill="none"/><path d="M432 520.6 V568" stroke="#c4c4c4" stroke-width="1"/><path d="M340.7 413 H421.6 V568" stroke="#141414" stroke-width="1" fill="none"/><path d="M469 421 L505.6 443.4" stroke="#8a5030" stroke-width="1" fill="none"/><path d="M577.2 478 V392 H467.8 V440 L535 463" stroke="#86a6ac" stroke-width="1.2" fill="none"/><path d="M560.6 472.6 L569 476 L577.2 478" stroke="#333" stroke-width="0.8" fill="none"/><rect x="509.4" y="392" width="13.2" height="7.2" fill="#fff" stroke="#111" stroke-width="1"/><path d="M515 394 v3 M520 393 v5" stroke="#141414" stroke-width="1" fill="none" stroke-width="0.8"/><rect x="576.8" y="363.3" width="10.4" height="21.69999999999999" fill="#c6f1f2" stroke="#80dee1" stroke-width="0.8"/><rect x="580.4" y="364.3" width="3.6" height="19.69999999999999" fill="#7fdde0"/><rect x="576.8" y="414.6" width="10.4" height="24.799999999999955" fill="#c6f1f2" stroke="#80dee1" stroke-width="0.8"/><rect x="580.4" y="415.6" width="3.6" height="22.799999999999955" fill="#7fdde0"/><rect x="576.8" y="479.8" width="10.4" height="38.400000000000034" fill="#c6f1f2" stroke="#80dee1" stroke-width="0.8"/><rect x="580.4" y="480.8" width="3.6" height="36.400000000000034" fill="#7fdde0"/><path d="M569 499.3 H593" stroke="#8fe0e4" stroke-width="0.8"/><path d="M576.8 363.3 H587.4 M576.8 385 H587.4 V414.6 H576.8 M576.8 439.4 H587 V479.8 H576.8 M576.8 518.2 H586.6 V568" stroke="#141414" stroke-width="1" fill="none"/><rect x="588.6" y="446.6" width="47.6" height="81.6" fill="none" stroke="#80dee1" stroke-width="2.4"/><rect x="350.40000000000003" y="265" width="2.6" height="7" fill="#7a1212"/><rect x="480.40000000000003" y="236" width="2.6" height="17.400000000000006" fill="#7a1212"/><rect x="350.40000000000003" y="363.8" width="2.6" height="8.0" fill="#7a1212"/><rect x="574.5999999999999" y="349" width="2.6" height="7.800000000000011" fill="#7a1212"/><rect x="467.6" y="420.8" width="2.6" height="8.800000000000011" fill="#7a1212"/><rect x="430.8" y="510.8" width="2.6" height="9.800000000000011" fill="#7a1212"/><rect x="480.4" y="235.4" width="4.6" height="2.6" fill="#c04a3a"/><rect x="429.6" y="368.4" width="2.8" height="3" fill="#7a1020"/><circle cx="510.6" cy="297.4" r="1.5" fill="#f6dada" stroke="#7a1212" stroke-width="0.8"/><rect x="385.9" y="369.0" width="5.2" height="2.8" rx="1" fill="#fff" stroke="#111" stroke-width="0.9"/><rect x="454.4" y="356.6" width="5.2" height="2.8" rx="1" fill="#fff" stroke="#111" stroke-width="0.9"/><rect x="529.4" y="358.90000000000003" width="5.2" height="2.8" rx="1" fill="#fff" stroke="#111" stroke-width="0.9"/><rect x="524.4" y="423.6" width="5.2" height="2.8" rx="1" fill="#fff" stroke="#111" stroke-width="0.9"/><rect x="493.4" y="515.9" width="5.2" height="2.8" rx="1" fill="#fff" stroke="#111" stroke-width="0.9"/><path d="M338 533.4 V508" stroke="#5ad04a" stroke-width="2"/><path d="M335.2 517 L338 510.4 L340.8 517 Z" stroke="#3ec030" stroke-width="1" fill="#fff"/><path d="M339.8 535 H354" stroke="#c02020" stroke-width="1.2"/><path d="M354 532.2 L361 535 L354 537.8 Z" stroke="#d02020" stroke-width="1" fill="#fff"/><rect x="336.6" y="533.6" width="3" height="3" fill="#fff" stroke="#1a1aa0" stroke-width="1"/><text x="341" y="532.4" font-family="Liberation Sans, sans-serif" font-weight="bold" font-size="9.6" fill="#1a1a8a">Z</text><text x="361.6" y="533.4" font-family="Liberation Sans, sans-serif" font-weight="bold" font-size="9.6" fill="#c02020">x</text><text x="335.2" y="508.4" font-family="Liberation Sans, sans-serif" font-weight="bold" font-size="9" fill="#4ed040">y</text></svg></div>
<div style="position:absolute;left:703.8px;top:166.6px;width:13.2px;height:401px;background:linear-gradient(90deg,#e4e4e4,#f4f4f4 40%,#f6f6f6);"></div>
<div style="position:absolute;left:704.2px;top:218.5px;width:12.4px;height:297px;background:linear-gradient(90deg,#f2f2f2,#dcdcdc 50%,#cfcfcf);border:1px solid #a4a4a4;border-radius:1.5px;"></div>
<svg class="a" style="left:704px;top:167px" width="13" height="401" viewBox="704 167 13 401"><path d="M708 174.6 H713 L710.5 171.8 Z" fill="#444"/><path d="M708 559.6 H713.2 L710.6 562.6 Z" fill="#333"/><path d="M708.6 364.6 H712.6 M708.6 366.8 H712.6 M708.6 369 H712.6" stroke="#666" stroke-width="0.8"/></svg>
<div style="position:absolute;left:305.2px;top:567.6px;width:398.6px;height:13.8px;background:linear-gradient(#e6e6e6,#f4f4f4 40%,#f3f3f3);"></div>
<div style="position:absolute;left:320.4px;top:568.2px;width:365.4px;height:12.6px;background:linear-gradient(#f4f4f4,#e0e0e0 50%,#d0d0d0);border:1px solid #a4a4a4;border-radius:1.5px;"></div>
<svg class="a" style="left:305px;top:568px" width="399" height="14" viewBox="305 568 399 14"><path d="M313.6 572 V577.2 L310.6 574.6 Z" fill="#333"/><path d="M695.4 572 V577.4 L698.4 574.7 Z" fill="#333"/><path d="M501.4 572.6 V576.8 M503.6 572.6 V576.8 M505.8 572.6 V576.8" stroke="#666" stroke-width="0.8"/></svg>
<div style="position:absolute;left:703.8px;top:567.6px;width:13.2px;height:29.2px;background:#f1f1f1;"></div>
<div style="position:absolute;left:305.2px;top:581.4px;width:398.59999999999997px;height:15.2px;background:linear-gradient(#fafafa,#f5f5f6);"></div>
<div style="position:absolute;left:458.5px;top:583px;width:1px;height:12.6px;background:#e2e4e8;"></div>
<div style="position:absolute;left:522.5px;top:583px;width:1px;height:12.6px;background:#e2e4e8;"></div>
<div style="position:absolute;left:576px;top:583px;width:1px;height:12.6px;background:#e2e4e8;"></div>
<div style="position:absolute;left:641px;top:583px;width:1px;height:12.6px;background:#e2e4e8;"></div>
<div style="position:absolute;left:701px;top:583px;width:1px;height:12.6px;background:#e2e4e8;"></div>
<span class="t" style="left:306.80px;top:584.75px;font-size:10.0px;color:#111;transform:scaleX(0.8815);">4970.1648,5359.6308,0.0000</span>
<span class="t" style="left:463.00px;top:584.75px;font-size:10.0px;color:#111;transform:scaleX(0.8791);">SNAP OFF</span>
<span class="t" style="left:526.00px;top:584.75px;font-size:10.0px;color:#111;transform:scaleX(0.8883);">GRID ON</span>
<span class="t" style="left:579.50px;top:584.75px;font-size:10.0px;color:#111;transform:scaleX(0.8944);">ORTHO OFF</span>
<span class="t" style="left:643.90px;top:584.75px;font-size:10.0px;color:#111;transform:scaleX(0.8871);">OSNAP OFF</span>
<svg class="a" style="left:0;top:0;pointer-events:none" width="791" height="627" viewBox="0 0 791 627" font-family="Liberation Serif, serif" font-size="9.8" font-weight="bold" fill="#3a3a3a" fill-opacity="0.23"><g transform="translate(27.0 55.0) rotate(-29.5)"><circle cx="-11.4" cy="-1.6" r="6.9" fill="none" stroke="#f0a050" stroke-opacity="0.36" stroke-width="1.1" stroke-dasharray="33 10.4" stroke-dashoffset="-5"/><text y="3.2"><tspan x="-24.5" textLength="18" lengthAdjust="spacingAndGlyphs" font-weight="normal" font-size="9">SAN</tspan><tspan x="-5.4" textLength="30" lengthAdjust="spacingAndGlyphs">TREND</tspan></text><path d="M-15 7 H9" stroke="#555" stroke-opacity="0.2" stroke-width="0.9" stroke-dasharray="1.2 0.8"/></g><g transform="translate(147.0 55.0) rotate(-29.5)"><circle cx="-11.4" cy="-1.6" r="6.9" fill="none" stroke="#f0a050" stroke-opacity="0.36" stroke-width="1.1" stroke-dasharray="33 10.4" stroke-dashoffset="-5"/><text y="3.2"><tspan x="-24.5" textLength="18" lengthAdjust="spacingAndGlyphs" font-weight="normal" font-size="9">SAN</tspan><tspan x="-5.4" textLength="30" lengthAdjust="spacingAndGlyphs">TREND</tspan></text><path d="M-15 7 H9" stroke="#555" stroke-opacity="0.2" stroke-width="0.9" stroke-dasharray="1.2 0.8"/></g><g transform="translate(267.0 55.0) rotate(-29.5)"><circle cx="-11.4" cy="-1.6" r="6.9" fill="none" stroke="#f0a050" stroke-opacity="0.36" stroke-width="1.1" stroke-dasharray="33 10.4" stroke-dashoffset="-5"/><text y="3.2"><tspan x="-24.5" textLength="18" lengthAdjust="spacingAndGlyphs" font-weight="normal" font-size="9">SAN</tspan><tspan x="-5.4" textLength="30" lengthAdjust="spacingAndGlyphs">TREND</tspan></text><path d="M-15 7 H9" stroke="#555" stroke-opacity="0.2" stroke-width="0.9" stroke-dasharray="1.2 0.8"/></g><g transform="translate(387.0 55.0) rotate(-29.5)"><circle cx="-11.4" cy="-1.6" r="6.9" fill="none" stroke="#f0a050" stroke-opacity="0.36" stroke-width="1.1" stroke-dasharray="33 10.4" stroke-dashoffset="-5"/><text y="3.2"><tspan x="-24.5" textLength="18" lengthAdjust="spacingAndGlyphs" font-weight="normal" font-size="9">SAN</tspan><tspan x="-5.4" textLength="30" lengthAdjust="spacingAndGlyphs">TREND</tspan></text><path d="M-15 7 H9" stroke="#555" stroke-opacity="0.2" stroke-width="0.9" stroke-dasharray="1.2 0.8"/></g><g transform="translate(507.0 55.0) rotate(-29.5)"><circle cx="-11.4" cy="-1.6" r="6.9" fill="none" stroke="#f0a050" stroke-opacity="0.36" stroke-width="1.1" stroke-dasharray="33 10.4" stroke-dashoffset="-5"/><text y="3.2"><tspan x="-24.5" textLength="18" lengthAdjust="spacingAndGlyphs" font-weight="normal" font-size="9">SAN</tspan><tspan x="-5.4" textLength="30" lengthAdjust="spacingAndGlyphs">TREND</tspan></text><path d="M-15 7 H9" stroke="#555" stroke-opacity="0.2" stroke-width="0.9" stroke-dasharray="1.2 0.8"/></g><g transform="translate(627.0 55.0) rotate(-29.5)"><circle cx="-11.4" cy="-1.6" r="6.9" fill="none" stroke="#f0a050" stroke-opacity="0.36" stroke-width="1.1" stroke-dasharray="33 10.4" stroke-dashoffset="-5"/><text y="3.2"><tspan x="-24.5" textLength="18" lengthAdjust="spacingAndGlyphs" font-weight="normal" font-size="9">SAN</tspan><tspan x="-5.4" textLength="30" lengthAdjust="spacingAndGlyphs">TREND</tspan></text><path d="M-15 7 H9" stroke="#555" stroke-opacity="0.2" stroke-width="0.9" stroke-dasharray="1.2 0.8"/></g><g transform="translate(747.0 55.0) rotate(-29.5)"><circle cx="-11.4" cy="-1.6" r="6.9" fill="none" stroke="#f0a050" stroke-opacity="0.36" stroke-width="1.1" stroke-dasharray="33 10.4" stroke-dashoffset="-5"/><text y="3.2"><tspan x="-24.5" textLength="18" lengthAdjust="spacingAndGlyphs" font-weight="normal" font-size="9">SAN</tspan><tspan x="-5.4" textLength="30" lengthAdjust="spacingAndGlyphs">TREND</tspan></text><path d="M-15 7 H9" stroke="#555" stroke-opacity="0.2" stroke-width="0.9" stroke-dasharray="1.2 0.8"/></g><g transform="translate(27.0 132.2) rotate(-29.5)"><circle cx="-11.4" cy="-1.6" r="6.9" fill="none" stroke="#f0a050" stroke-opacity="0.36" stroke-width="1.1" stroke-dasharray="33 10.4" stroke-dashoffset="-5"/><text y="3.2"><tspan x="-24.5" textLength="18" lengthAdjust="spacingAndGlyphs" font-weight="normal" font-size="9">SAN</tspan><tspan x="-5.4" textLength="30" lengthAdjust="spacingAndGlyphs">TREND</tspan></text><path d="M-15 7 H9" stroke="#555" stroke-opacity="0.2" stroke-width="0.9" stroke-dasharray="1.2 0.8"/></g><g transform="translate(147.0 132.2) rotate(-29.5)"><circle cx="-11.4" cy="-1.6" r="6.9" fill="none" stroke="#f0a050" stroke-opacity="0.36" stroke-width="1.1" stroke-dasharray="33 10.4" stroke-dashoffset="-5"/><text y="3.2"><tspan x="-24.5" textLength="18" lengthAdjust="spacingAndGlyphs" font-weight="normal" font-size="9">SAN</tspan><tspan x="-5.4" textLength="30" lengthAdjust="spacingAndGlyphs">TREND</tspan></text><path d="M-15 7 H9" stroke="#555" stroke-opacity="0.2" stroke-width="0.9" stroke-dasharray="1.2 0.8"/></g><g transform="translate(267.0 132.2) rotate(-29.5)"><circle cx="-11.4" cy="-1.6" r="6.9" fill="none" stroke="#f0a050" stroke-opacity="0.36" stroke-width="1.1" stroke-dasharray="33 10.4" stroke-dashoffset="-5"/><text y="3.2"><tspan x="-24.5" textLength="18" lengthAdjust="spacingAndGlyphs" font-weight="normal" font-size="9">SAN</tspan><tspan x="-5.4" textLength="30" lengthAdjust="spacingAndGlyphs">TREND</tspan></text><path d="M-15 7 H9" stroke="#555" stroke-opacity="0.2" stroke-width="0.9" stroke-dasharray="1.2 0.8"/></g><g transform="translate(387.0 132.2) rotate(-29.5)"><circle cx="-11.4" cy="-1.6" r="6.9" fill="none" stroke="#f0a050" stroke-opacity="0.36" stroke-width="1.1" stroke-dasharray="33 10.4" stroke-dashoffset="-5"/><text y="3.2"><tspan x="-24.5" textLength="18" lengthAdjust="spacingAndGlyphs" font-weight="normal" font-size="9">SAN</tspan><tspan x="-5.4" textLength="30" lengthAdjust="spacingAndGlyphs">TREND</tspan></text><path d="M-15 7 H9" stroke="#555" stroke-opacity="0.2" stroke-width="0.9" stroke-dasharray="1.2 0.8"/></g><g transform="translate(507.0 132.2) rotate(-29.5)"><circle cx="-11.4" cy="-1.6" r="6.9" fill="none" stroke="#f0a050" stroke-opacity="0.36" stroke-width="1.1" stroke-dasharray="33 10.4" stroke-dashoffset="-5"/><text y="3.2"><tspan x="-24.5" textLength="18" lengthAdjust="spacingAndGlyphs" font-weight="normal" font-size="9">SAN</tspan><tspan x="-5.4" textLength="30" lengthAdjust="spacingAndGlyphs">TREND</tspan></text><path d="M-15 7 H9" stroke="#555" stroke-opacity="0.2" stroke-width="0.9" stroke-dasharray="1.2 0.8"/></g><g transform="translate(627.0 132.2) rotate(-29.5)"><circle cx="-11.4" cy="-1.6" r="6.9" fill="none" stroke="#f0a050" stroke-opacity="0.36" stroke-width="1.1" stroke-dasharray="33 10.4" stroke-dashoffset="-5"/><text y="3.2"><tspan x="-24.5" textLength="18" lengthAdjust="spacingAndGlyphs" font-weight="normal" font-size="9">SAN</tspan><tspan x="-5.4" textLength="30" lengthAdjust="spacingAndGlyphs">TREND</tspan></text><path d="M-15 7 H9" stroke="#555" stroke-opacity="0.2" stroke-width="0.9" stroke-dasharray="1.2 0.8"/></g><g transform="translate(747.0 132.2) rotate(-29.5)"><circle cx="-11.4" cy="-1.6" r="6.9" fill="none" stroke="#f0a050" stroke-opacity="0.36" stroke-width="1.1" stroke-dasharray="33 10.4" stroke-dashoffset="-5"/><text y="3.2"><tspan x="-24.5" textLength="18" lengthAdjust="spacingAndGlyphs" font-weight="normal" font-size="9">SAN</tspan><tspan x="-5.4" textLength="30" lengthAdjust="spacingAndGlyphs">TREND</tspan></text><path d="M-15 7 H9" stroke="#555" stroke-opacity="0.2" stroke-width="0.9" stroke-dasharray="1.2 0.8"/></g><g transform="translate(27.0 209.4) rotate(-29.5)"><circle cx="-11.4" cy="-1.6" r="6.9" fill="none" stroke="#f0a050" stroke-opacity="0.36" stroke-width="1.1" stroke-dasharray="33 10.4" stroke-dashoffset="-5"/><text y="3.2"><tspan x="-24.5" textLength="18" lengthAdjust="spacingAndGlyphs" font-weight="normal" font-size="9">SAN</tspan><tspan x="-5.4" textLength="30" lengthAdjust="spacingAndGlyphs">TREND</tspan></text><path d="M-15 7 H9" stroke="#555" stroke-opacity="0.2" stroke-width="0.9" stroke-dasharray="1.2 0.8"/></g><g transform="translate(147.0 209.4) rotate(-29.5)"><circle cx="-11.4" cy="-1.6" r="6.9" fill="none" stroke="#f0a050" stroke-opacity="0.36" stroke-width="1.1" stroke-dasharray="33 10.4" stroke-dashoffset="-5"/><text y="3.2"><tspan x="-24.5" textLength="18" lengthAdjust="spacingAndGlyphs" font-weight="normal" font-size="9">SAN</tspan><tspan x="-5.4" textLength="30" lengthAdjust="spacingAndGlyphs">TREND</tspan></text><path d="M-15 7 H9" stroke="#555" stroke-opacity="0.2" stroke-width="0.9" stroke-dasharray="1.2 0.8"/></g><g transform="translate(267.0 209.4) rotate(-29.5)"><circle cx="-11.4" cy="-1.6" r="6.9" fill="none" stroke="#f0a050" stroke-opacity="0.36" stroke-width="1.1" stroke-dasharray="33 10.4" stroke-dashoffset="-5"/><text y="3.2"><tspan x="-24.5" textLength="18" lengthAdjust="spacingAndGlyphs" font-weight="normal" font-size="9">SAN</tspan><tspan x="-5.4" textLength="30" lengthAdjust="spacingAndGlyphs">TREND</tspan></text><path d="M-15 7 H9" stroke="#555" stroke-opacity="0.2" stroke-width="0.9" stroke-dasharray="1.2 0.8"/></g><g transform="translate(387.0 209.4) rotate(-29.5)"><circle cx="-11.4" cy="-1.6" r="6.9" fill="none" stroke="#f0a050" stroke-opacity="0.36" stroke-width="1.1" stroke-dasharray="33 10.4" stroke-dashoffset="-5"/><text y="3.2"><tspan x="-24.5" textLength="18" lengthAdjust="spacingAndGlyphs" font-weight="normal" font-size="9">SAN</tspan><tspan x="-5.4" textLength="30" lengthAdjust="spacingAndGlyphs">TREND</tspan></text><path d="M-15 7 H9" stroke="#555" stroke-opacity="0.2" stroke-width="0.9" stroke-dasharray="1.2 0.8"/></g><g transform="translate(507.0 209.4) rotate(-29.5)"><circle cx="-11.4" cy="-1.6" r="6.9" fill="none" stroke="#f0a050" stroke-opacity="0.36" stroke-width="1.1" stroke-dasharray="33 10.4" stroke-dashoffset="-5"/><text y="3.2"><tspan x="-24.5" textLength="18" lengthAdjust="spacingAndGlyphs" font-weight="normal" font-size="9">SAN</tspan><tspan x="-5.4" textLength="30" lengthAdjust="spacingAndGlyphs">TREND</tspan></text><path d="M-15 7 H9" stroke="#555" stroke-opacity="0.2" stroke-width="0.9" stroke-dasharray="1.2 0.8"/></g><g transform="translate(627.0 209.4) rotate(-29.5)"><circle cx="-11.4" cy="-1.6" r="6.9" fill="none" stroke="#f0a050" stroke-opacity="0.36" stroke-width="1.1" stroke-dasharray="33 10.4" stroke-dashoffset="-5"/><text y="3.2"><tspan x="-24.5" textLength="18" lengthAdjust="spacingAndGlyphs" font-weight="normal" font-size="9">SAN</tspan><tspan x="-5.4" textLength="30" lengthAdjust="spacingAndGlyphs">TREND</tspan></text><path d="M-15 7 H9" stroke="#555" stroke-opacity="0.2" stroke-width="0.9" stroke-dasharray="1.2 0.8"/></g><g transform="translate(747.0 209.4) rotate(-29.5)"><circle cx="-11.4" cy="-1.6" r="6.9" fill="none" stroke="#f0a050" stroke-opacity="0.36" stroke-width="1.1" stroke-dasharray="33 10.4" stroke-dashoffset="-5"/><text y="3.2"><tspan x="-24.5" textLength="18" lengthAdjust="spacingAndGlyphs" font-weight="normal" font-size="9">SAN</tspan><tspan x="-5.4" textLength="30" lengthAdjust="spacingAndGlyphs">TREND</tspan></text><path d="M-15 7 H9" stroke="#555" stroke-opacity="0.2" stroke-width="0.9" stroke-dasharray="1.2 0.8"/></g><g transform="translate(27.0 286.6) rotate(-29.5)"><circle cx="-11.4" cy="-1.6" r="6.9" fill="none" stroke="#f0a050" stroke-opacity="0.36" stroke-width="1.1" stroke-dasharray="33 10.4" stroke-dashoffset="-5"/><text y="3.2"><tspan x="-24.5" textLength="18" lengthAdjust="spacingAndGlyphs" font-weight="normal" font-size="9">SAN</tspan><tspan x="-5.4" textLength="30" lengthAdjust="spacingAndGlyphs">TREND</tspan></text><path d="M-15 7 H9" stroke="#555" stroke-opacity="0.2" stroke-width="0.9" stroke-dasharray="1.2 0.8"/></g><g transform="translate(147.0 286.6) rotate(-29.5)"><circle cx="-11.4" cy="-1.6" r="6.9" fill="none" stroke="#f0a050" stroke-opacity="0.36" stroke-width="1.1" stroke-dasharray="33 10.4" stroke-dashoffset="-5"/><text y="3.2"><tspan x="-24.5" textLength="18" lengthAdjust="spacingAndGlyphs" font-weight="normal" font-size="9">SAN</tspan><tspan x="-5.4" textLength="30" lengthAdjust="spacingAndGlyphs">TREND</tspan></text><path d="M-15 7 H9" stroke="#555" stroke-opacity="0.2" stroke-width="0.9" stroke-dasharray="1.2 0.8"/></g><g transform="translate(267.0 286.6) rotate(-29.5)"><circle cx="-11.4" cy="-1.6" r="6.9" fill="none" stroke="#f0a050" stroke-opacity="0.36" stroke-width="1.1" stroke-dasharray="33 10.4" stroke-dashoffset="-5"/><text y="3.2"><tspan x="-24.5" textLength="18" lengthAdjust="spacingAndGlyphs" font-weight="normal" font-size="9">SAN</tspan><tspan x="-5.4" textLength="30" lengthAdjust="spacingAndGlyphs">TREND</tspan></text><path d="M-15 7 H9" stroke="#555" stroke-opacity="0.2" stroke-width="0.9" stroke-dasharray="1.2 0.8"/></g><g transform="translate(387.0 286.6) rotate(-29.5)"><circle cx="-11.4" cy="-1.6" r="6.9" fill="none" stroke="#f0a050" stroke-opacity="0.36" stroke-width="1.1" stroke-dasharray="33 10.4" stroke-dashoffset="-5"/><text y="3.2"><tspan x="-24.5" textLength="18" lengthAdjust="spacingAndGlyphs" font-weight="normal" font-size="9">SAN</tspan><tspan x="-5.4" textLength="30" lengthAdjust="spacingAndGlyphs">TREND</tspan></text><path d="M-15 7 H9" stroke="#555" stroke-opacity="0.2" stroke-width="0.9" stroke-dasharray="1.2 0.8"/></g><g transform="translate(507.0 286.6) rotate(-29.5)"><circle cx="-11.4" cy="-1.6" r="6.9" fill="none" stroke="#f0a050" stroke-opacity="0.36" stroke-width="1.1" stroke-dasharray="33 10.4" stroke-dashoffset="-5"/><text y="3.2"><tspan x="-24.5" textLength="18" lengthAdjust="spacingAndGlyphs" font-weight="normal" font-size="9">SAN</tspan><tspan x="-5.4" textLength="30" lengthAdjust="spacingAndGlyphs">TREND</tspan></text><path d="M-15 7 H9" stroke="#555" stroke-opacity="0.2" stroke-width="0.9" stroke-dasharray="1.2 0.8"/></g><g transform="translate(627.0 286.6) rotate(-29.5)"><circle cx="-11.4" cy="-1.6" r="6.9" fill="none" stroke="#f0a050" stroke-opacity="0.36" stroke-width="1.1" stroke-dasharray="33 10.4" stroke-dashoffset="-5"/><text y="3.2"><tspan x="-24.5" textLength="18" lengthAdjust="spacingAndGlyphs" font-weight="normal" font-size="9">SAN</tspan><tspan x="-5.4" textLength="30" lengthAdjust="spacingAndGlyphs">TREND</tspan></text><path d="M-15 7 H9" stroke="#555" stroke-opacity="0.2" stroke-width="0.9" stroke-dasharray="1.2 0.8"/></g><g transform="translate(747.0 286.6) rotate(-29.5)"><circle cx="-11.4" cy="-1.6" r="6.9" fill="none" stroke="#f0a050" stroke-opacity="0.36" stroke-width="1.1" stroke-dasharray="33 10.4" stroke-dashoffset="-5"/><text y="3.2"><tspan x="-24.5" textLength="18" lengthAdjust="spacingAndGlyphs" font-weight="normal" font-size="9">SAN</tspan><tspan x="-5.4" textLength="30" lengthAdjust="spacingAndGlyphs">TREND</tspan></text><path d="M-15 7 H9" stroke="#555" stroke-opacity="0.2" stroke-width="0.9" stroke-dasharray="1.2 0.8"/></g><g transform="translate(27.0 363.8) rotate(-29.5)"><circle cx="-11.4" cy="-1.6" r="6.9" fill="none" stroke="#f0a050" stroke-opacity="0.36" stroke-width="1.1" stroke-dasharray="33 10.4" stroke-dashoffset="-5"/><text y="3.2"><tspan x="-24.5" textLength="18" lengthAdjust="spacingAndGlyphs" font-weight="normal" font-size="9">SAN</tspan><tspan x="-5.4" textLength="30" lengthAdjust="spacingAndGlyphs">TREND</tspan></text><path d="M-15 7 H9" stroke="#555" stroke-opacity="0.2" stroke-width="0.9" stroke-dasharray="1.2 0.8"/></g><g transform="translate(147.0 363.8) rotate(-29.5)"><circle cx="-11.4" cy="-1.6" r="6.9" fill="none" stroke="#f0a050" stroke-opacity="0.36" stroke-width="1.1" stroke-dasharray="33 10.4" stroke-dashoffset="-5"/><text y="3.2"><tspan x="-24.5" textLength="18" lengthAdjust="spacingAndGlyphs" font-weight="normal" font-size="9">SAN</tspan><tspan x="-5.4" textLength="30" lengthAdjust="spacingAndGlyphs">TREND</tspan></text><path d="M-15 7 H9" stroke="#555" stroke-opacity="0.2" stroke-width="0.9" stroke-dasharray="1.2 0.8"/></g><g transform="translate(267.0 363.8) rotate(-29.5)"><circle cx="-11.4" cy="-1.6" r="6.9" fill="none" stroke="#f0a050" stroke-opacity="0.36" stroke-width="1.1" stroke-dasharray="33 10.4" stroke-dashoffset="-5"/><text y="3.2"><tspan x="-24.5" textLength="18" lengthAdjust="spacingAndGlyphs" font-weight="normal" font-size="9">SAN</tspan><tspan x="-5.4" textLength="30" lengthAdjust="spacingAndGlyphs">TREND</tspan></text><path d="M-15 7 H9" stroke="#555" stroke-opacity="0.2" stroke-width="0.9" stroke-dasharray="1.2 0.8"/></g><g transform="translate(387.0 363.8) rotate(-29.5)"><circle cx="-11.4" cy="-1.6" r="6.9" fill="none" stroke="#f0a050" stroke-opacity="0.36" stroke-width="1.1" stroke-dasharray="33 10.4" stroke-dashoffset="-5"/><text y="3.2"><tspan x="-24.5" textLength="18" lengthAdjust="spacingAndGlyphs" font-weight="normal" font-size="9">SAN</tspan><tspan x="-5.4" textLength="30" lengthAdjust="spacingAndGlyphs">TREND</tspan></text><path d="M-15 7 H9" stroke="#555" stroke-opacity="0.2" stroke-width="0.9" stroke-dasharray="1.2 0.8"/></g><g transform="translate(507.0 363.8) rotate(-29.5)"><circle cx="-11.4" cy="-1.6" r="6.9" fill="none" stroke="#f0a050" stroke-opacity="0.36" stroke-width="1.1" stroke-dasharray="33 10.4" stroke-dashoffset="-5"/><text y="3.2"><tspan x="-24.5" textLength="18" lengthAdjust="spacingAndGlyphs" font-weight="normal" font-size="9">SAN</tspan><tspan x="-5.4" textLength="30" lengthAdjust="spacingAndGlyphs">TREND</tspan></text><path d="M-15 7 H9" stroke="#555" stroke-opacity="0.2" stroke-width="0.9" stroke-dasharray="1.2 0.8"/></g><g transform="translate(627.0 363.8) rotate(-29.5)"><circle cx="-11.4" cy="-1.6" r="6.9" fill="none" stroke="#f0a050" stroke-opacity="0.36" stroke-width="1.1" stroke-dasharray="33 10.4" stroke-dashoffset="-5"/><text y="3.2"><tspan x="-24.5" textLength="18" lengthAdjust="spacingAndGlyphs" font-weight="normal" font-size="9">SAN</tspan><tspan x="-5.4" textLength="30" lengthAdjust="spacingAndGlyphs">TREND</tspan></text><path d="M-15 7 H9" stroke="#555" stroke-opacity="0.2" stroke-width="0.9" stroke-dasharray="1.2 0.8"/></g><g transform="translate(747.0 363.8) rotate(-29.5)"><circle cx="-11.4" cy="-1.6" r="6.9" fill="none" stroke="#f0a050" stroke-opacity="0.36" stroke-width="1.1" stroke-dasharray="33 10.4" stroke-dashoffset="-5"/><text y="3.2"><tspan x="-24.5" textLength="18" lengthAdjust="spacingAndGlyphs" font-weight="normal" font-size="9">SAN</tspan><tspan x="-5.4" textLength="30" lengthAdjust="spacingAndGlyphs">TREND</tspan></text><path d="M-15 7 H9" stroke="#555" stroke-opacity="0.2" stroke-width="0.9" stroke-dasharray="1.2 0.8"/></g><g transform="translate(27.0 441.0) rotate(-29.5)"><circle cx="-11.4" cy="-1.6" r="6.9" fill="none" stroke="#f0a050" stroke-opacity="0.36" stroke-width="1.1" stroke-dasharray="33 10.4" stroke-dashoffset="-5"/><text y="3.2"><tspan x="-24.5" textLength="18" lengthAdjust="spacingAndGlyphs" font-weight="normal" font-size="9">SAN</tspan><tspan x="-5.4" textLength="30" lengthAdjust="spacingAndGlyphs">TREND</tspan></text><path d="M-15 7 H9" stroke="#555" stroke-opacity="0.2" stroke-width="0.9" stroke-dasharray="1.2 0.8"/></g><g transform="translate(147.0 441.0) rotate(-29.5)"><circle cx="-11.4" cy="-1.6" r="6.9" fill="none" stroke="#f0a050" stroke-opacity="0.36" stroke-width="1.1" stroke-dasharray="33 10.4" stroke-dashoffset="-5"/><text y="3.2"><tspan x="-24.5" textLength="18" lengthAdjust="spacingAndGlyphs" font-weight="normal" font-size="9">SAN</tspan><tspan x="-5.4" textLength="30" lengthAdjust="spacingAndGlyphs">TREND</tspan></text><path d="M-15 7 H9" stroke="#555" stroke-opacity="0.2" stroke-width="0.9" stroke-dasharray="1.2 0.8"/></g><g transform="translate(267.0 441.0) rotate(-29.5)"><circle cx="-11.4" cy="-1.6" r="6.9" fill="none" stroke="#f0a050" stroke-opacity="0.36" stroke-width="1.1" stroke-dasharray="33 10.4" stroke-dashoffset="-5"/><text y="3.2"><tspan x="-24.5" textLength="18" lengthAdjust="spacingAndGlyphs" font-weight="normal" font-size="9">SAN</tspan><tspan x="-5.4" textLength="30" lengthAdjust="spacingAndGlyphs">TREND</tspan></text><path d="M-15 7 H9" stroke="#555" stroke-opacity="0.2" stroke-width="0.9" stroke-dasharray="1.2 0.8"/></g><g transform="translate(387.0 441.0) rotate(-29.5)"><circle cx="-11.4" cy="-1.6" r="6.9" fill="none" stroke="#f0a050" stroke-opacity="0.36" stroke-width="1.1" stroke-dasharray="33 10.4" stroke-dashoffset="-5"/><text y="3.2"><tspan x="-24.5" textLength="18" lengthAdjust="spacingAndGlyphs" font-weight="normal" font-size="9">SAN</tspan><tspan x="-5.4" textLength="30" lengthAdjust="spacingAndGlyphs">TREND</tspan></text><path d="M-15 7 H9" stroke="#555" stroke-opacity="0.2" stroke-width="0.9" stroke-dasharray="1.2 0.8"/></g><g transform="translate(507.0 441.0) rotate(-29.5)"><circle cx="-11.4" cy="-1.6" r="6.9" fill="none" stroke="#f0a050" stroke-opacity="0.36" stroke-width="1.1" stroke-dasharray="33 10.4" stroke-dashoffset="-5"/><text y="3.2"><tspan x="-24.5" textLength="18" lengthAdjust="spacingAndGlyphs" font-weight="normal" font-size="9">SAN</tspan><tspan x="-5.4" textLength="30" lengthAdjust="spacingAndGlyphs">TREND</tspan></text><path d="M-15 7 H9" stroke="#555" stroke-opacity="0.2" stroke-width="0.9" stroke-dasharray="1.2 0.8"/></g><g transform="translate(627.0 441.0) rotate(-29.5)"><circle cx="-11.4" cy="-1.6" r="6.9" fill="none" stroke="#f0a050" stroke-opacity="0.36" stroke-width="1.1" stroke-dasharray="33 10.4" stroke-dashoffset="-5"/><text y="3.2"><tspan x="-24.5" textLength="18" lengthAdjust="spacingAndGlyphs" font-weight="normal" font-size="9">SAN</tspan><tspan x="-5.4" textLength="30" lengthAdjust="spacingAndGlyphs">TREND</tspan></text><path d="M-15 7 H9" stroke="#555" stroke-opacity="0.2" stroke-width="0.9" stroke-dasharray="1.2 0.8"/></g><g transform="translate(747.0 441.0) rotate(-29.5)"><circle cx="-11.4" cy="-1.6" r="6.9" fill="none" stroke="#f0a050" stroke-opacity="0.36" stroke-width="1.1" stroke-dasharray="33 10.4" stroke-dashoffset="-5"/><text y="3.2"><tspan x="-24.5" textLength="18" lengthAdjust="spacingAndGlyphs" font-weight="normal" font-size="9">SAN</tspan><tspan x="-5.4" textLength="30" lengthAdjust="spacingAndGlyphs">TREND</tspan></text><path d="M-15 7 H9" stroke="#555" stroke-opacity="0.2" stroke-width="0.9" stroke-dasharray="1.2 0.8"/></g><g transform="translate(27.0 518.2) rotate(-29.5)"><circle cx="-11.4" cy="-1.6" r="6.9" fill="none" stroke="#f0a050" stroke-opacity="0.36" stroke-width="1.1" stroke-dasharray="33 10.4" stroke-dashoffset="-5"/><text y="3.2"><tspan x="-24.5" textLength="18" lengthAdjust="spacingAndGlyphs" font-weight="normal" font-size="9">SAN</tspan><tspan x="-5.4" textLength="30" lengthAdjust="spacingAndGlyphs">TREND</tspan></text><path d="M-15 7 H9" stroke="#555" stroke-opacity="0.2" stroke-width="0.9" stroke-dasharray="1.2 0.8"/></g><g transform="translate(147.0 518.2) rotate(-29.5)"><circle cx="-11.4" cy="-1.6" r="6.9" fill="none" stroke="#f0a050" stroke-opacity="0.36" stroke-width="1.1" stroke-dasharray="33 10.4" stroke-dashoffset="-5"/><text y="3.2"><tspan x="-24.5" textLength="18" lengthAdjust="spacingAndGlyphs" font-weight="normal" font-size="9">SAN</tspan><tspan x="-5.4" textLength="30" lengthAdjust="spacingAndGlyphs">TREND</tspan></text><path d="M-15 7 H9" stroke="#555" stroke-opacity="0.2" stroke-width="0.9" stroke-dasharray="1.2 0.8"/></g><g transform="translate(267.0 518.2) rotate(-29.5)"><circle cx="-11.4" cy="-1.6" r="6.9" fill="none" stroke="#f0a050" stroke-opacity="0.36" stroke-width="1.1" stroke-dasharray="33 10.4" stroke-dashoffset="-5"/><text y="3.2"><tspan x="-24.5" textLength="18" lengthAdjust="spacingAndGlyphs" font-weight="normal" font-size="9">SAN</tspan><tspan x="-5.4" textLength="30" lengthAdjust="spacingAndGlyphs">TREND</tspan></text><path d="M-15 7 H9" stroke="#555" stroke-opacity="0.2" stroke-width="0.9" stroke-dasharray="1.2 0.8"/></g><g transform="translate(387.0 518.2) rotate(-29.5)"><circle cx="-11.4" cy="-1.6" r="6.9" fill="none" stroke="#f0a050" stroke-opacity="0.36" stroke-width="1.1" stroke-dasharray="33 10.4" stroke-dashoffset="-5"/><text y="3.2"><tspan x="-24.5" textLength="18" lengthAdjust="spacingAndGlyphs" font-weight="normal" font-size="9">SAN</tspan><tspan x="-5.4" textLength="30" lengthAdjust="spacingAndGlyphs">TREND</tspan></text><path d="M-15 7 H9" stroke="#555" stroke-opacity="0.2" stroke-width="0.9" stroke-dasharray="1.2 0.8"/></g><g transform="translate(507.0 518.2) rotate(-29.5)"><circle cx="-11.4" cy="-1.6" r="6.9" fill="none" stroke="#f0a050" stroke-opacity="0.36" stroke-width="1.1" stroke-dasharray="33 10.4" stroke-dashoffset="-5"/><text y="3.2"><tspan x="-24.5" textLength="18" lengthAdjust="spacingAndGlyphs" font-weight="normal" font-size="9">SAN</tspan><tspan x="-5.4" textLength="30" lengthAdjust="spacingAndGlyphs">TREND</tspan></text><path d="M-15 7 H9" stroke="#555" stroke-opacity="0.2" stroke-width="0.9" stroke-dasharray="1.2 0.8"/></g><g transform="translate(627.0 518.2) rotate(-29.5)"><circle cx="-11.4" cy="-1.6" r="6.9" fill="none" stroke="#f0a050" stroke-opacity="0.36" stroke-width="1.1" stroke-dasharray="33 10.4" stroke-dashoffset="-5"/><text y="3.2"><tspan x="-24.5" textLength="18" lengthAdjust="spacingAndGlyphs" font-weight="normal" font-size="9">SAN</tspan><tspan x="-5.4" textLength="30" lengthAdjust="spacingAndGlyphs">TREND</tspan></text><path d="M-15 7 H9" stroke="#555" stroke-opacity="0.2" stroke-width="0.9" stroke-dasharray="1.2 0.8"/></g><g transform="translate(747.0 518.2) rotate(-29.5)"><circle cx="-11.4" cy="-1.6" r="6.9" fill="none" stroke="#f0a050" stroke-opacity="0.36" stroke-width="1.1" stroke-dasharray="33 10.4" stroke-dashoffset="-5"/><text y="3.2"><tspan x="-24.5" textLength="18" lengthAdjust="spacingAndGlyphs" font-weight="normal" font-size="9">SAN</tspan><tspan x="-5.4" textLength="30" lengthAdjust="spacingAndGlyphs">TREND</tspan></text><path d="M-15 7 H9" stroke="#555" stroke-opacity="0.2" stroke-width="0.9" stroke-dasharray="1.2 0.8"/></g><g transform="translate(27.0 595.4) rotate(-29.5)"><circle cx="-11.4" cy="-1.6" r="6.9" fill="none" stroke="#f0a050" stroke-opacity="0.36" stroke-width="1.1" stroke-dasharray="33 10.4" stroke-dashoffset="-5"/><text y="3.2"><tspan x="-24.5" textLength="18" lengthAdjust="spacingAndGlyphs" font-weight="normal" font-size="9">SAN</tspan><tspan x="-5.4" textLength="30" lengthAdjust="spacingAndGlyphs">TREND</tspan></text><path d="M-15 7 H9" stroke="#555" stroke-opacity="0.2" stroke-width="0.9" stroke-dasharray="1.2 0.8"/></g><g transform="translate(147.0 595.4) rotate(-29.5)"><circle cx="-11.4" cy="-1.6" r="6.9" fill="none" stroke="#f0a050" stroke-opacity="0.36" stroke-width="1.1" stroke-dasharray="33 10.4" stroke-dashoffset="-5"/><text y="3.2"><tspan x="-24.5" textLength="18" lengthAdjust="spacingAndGlyphs" font-weight="normal" font-size="9">SAN</tspan><tspan x="-5.4" textLength="30" lengthAdjust="spacingAndGlyphs">TREND</tspan></text><path d="M-15 7 H9" stroke="#555" stroke-opacity="0.2" stroke-width="0.9" stroke-dasharray="1.2 0.8"/></g><g transform="translate(267.0 595.4) rotate(-29.5)"><circle cx="-11.4" cy="-1.6" r="6.9" fill="none" stroke="#f0a050" stroke-opacity="0.36" stroke-width="1.1" stroke-dasharray="33 10.4" stroke-dashoffset="-5"/><text y="3.2"><tspan x="-24.5" textLength="18" lengthAdjust="spacingAndGlyphs" font-weight="normal" font-size="9">SAN</tspan><tspan x="-5.4" textLength="30" lengthAdjust="spacingAndGlyphs">TREND</tspan></text><path d="M-15 7 H9" stroke="#555" stroke-opacity="0.2" stroke-width="0.9" stroke-dasharray="1.2 0.8"/></g><g transform="translate(387.0 595.4) rotate(-29.5)"><circle cx="-11.4" cy="-1.6" r="6.9" fill="none" stroke="#f0a050" stroke-opacity="0.36" stroke-width="1.1" stroke-dasharray="33 10.4" stroke-dashoffset="-5"/><text y="3.2"><tspan x="-24.5" textLength="18" lengthAdjust="spacingAndGlyphs" font-weight="normal" font-size="9">SAN</tspan><tspan x="-5.4" textLength="30" lengthAdjust="spacingAndGlyphs">TREND</tspan></text><path d="M-15 7 H9" stroke="#555" stroke-opacity="0.2" stroke-width="0.9" stroke-dasharray="1.2 0.8"/></g><g transform="translate(507.0 595.4) rotate(-29.5)"><circle cx="-11.4" cy="-1.6" r="6.9" fill="none" stroke="#f0a050" stroke-opacity="0.36" stroke-width="1.1" stroke-dasharray="33 10.4" stroke-dashoffset="-5"/><text y="3.2"><tspan x="-24.5" textLength="18" lengthAdjust="spacingAndGlyphs" font-weight="normal" font-size="9">SAN</tspan><tspan x="-5.4" textLength="30" lengthAdjust="spacingAndGlyphs">TREND</tspan></text><path d="M-15 7 H9" stroke="#555" stroke-opacity="0.2" stroke-width="0.9" stroke-dasharray="1.2 0.8"/></g><g transform="translate(627.0 595.4) rotate(-29.5)"><circle cx="-11.4" cy="-1.6" r="6.9" fill="none" stroke="#f0a050" stroke-opacity="0.36" stroke-width="1.1" stroke-dasharray="33 10.4" stroke-dashoffset="-5"/><text y="3.2"><tspan x="-24.5" textLength="18" lengthAdjust="spacingAndGlyphs" font-weight="normal" font-size="9">SAN</tspan><tspan x="-5.4" textLength="30" lengthAdjust="spacingAndGlyphs">TREND</tspan></text><path d="M-15 7 H9" stroke="#555" stroke-opacity="0.2" stroke-width="0.9" stroke-dasharray="1.2 0.8"/></g><g transform="translate(747.0 595.4) rotate(-29.5)"><circle cx="-11.4" cy="-1.6" r="6.9" fill="none" stroke="#f0a050" stroke-opacity="0.36" stroke-width="1.1" stroke-dasharray="33 10.4" stroke-dashoffset="-5"/><text y="3.2"><tspan x="-24.5" textLength="18" lengthAdjust="spacingAndGlyphs" font-weight="normal" font-size="9">SAN</tspan><tspan x="-5.4" textLength="30" lengthAdjust="spacingAndGlyphs">TREND</tspan></text><path d="M-15 7 H9" stroke="#555" stroke-opacity="0.2" stroke-width="0.9" stroke-dasharray="1.2 0.8"/></g></svg></div>
</body>
</html>
